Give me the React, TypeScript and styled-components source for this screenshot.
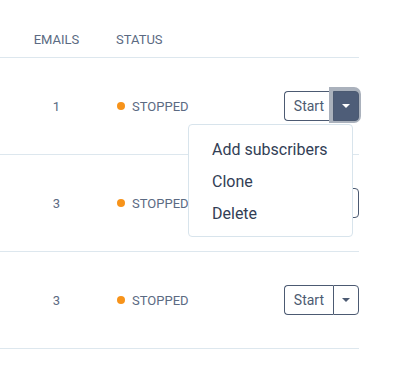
import React from "react";
import styled, { createGlobalStyle } from "styled-components";

const Global = createGlobalStyle`
  html, body { margin: 0; padding: 0; background: #ffffff; }
  body { font-family: Roboto, "Liberation Sans", sans-serif; }
`;

const Table = styled.div`
  width: 359px;
  display: flex;
  flex-direction: column;
`;

const Row = styled.div<{ $header?: boolean }>`
  display: grid;
  grid-template-columns: 113px 1fr auto;
  align-items: ${(p) => (p.$header ? "end" : "center")};
  height: ${(p) => (p.$header ? "48px" : "96px")};
  padding-bottom: ${(p) => (p.$header ? "9px" : "0")};
  border-bottom: 1px solid #dde7ee;
`;

const HeadCell = styled.div<{ $center?: boolean }>`
  font-size: 13px;
  color: #5b6a82;
  text-transform: uppercase;
  text-align: ${(p) => (p.$center ? "center" : "left")};
  padding-left: ${(p) => (p.$center ? "0" : "3px")};
  line-height: 16px;
`;

const Cell = styled.div<{ $center?: boolean }>`
  font-size: 13px;
  color: #5b6a82;
  text-align: ${(p) => (p.$center ? "center" : "left")};
  padding-left: ${(p) => (p.$center ? "0" : "4px")};
`;

const Status = styled.div`
  display: flex;
  align-items: center;
  gap: 7px;
  font-size: 13px;
  color: #5b6a82;
  text-transform: uppercase;
`;

const Dot = styled.span`
  width: 8px;
  height: 8px;
  border-radius: 50%;
  background: #f7931a;
`;

const ActionCell = styled.div`
  position: relative;
  display: flex;
  justify-content: flex-end;
`;

const SplitButton = styled.div`
  display: flex;
  height: 30px;
`;

const StartButton = styled.button`
  height: 30px;
  box-sizing: border-box;
  padding: 0 9px;
  border: 1px solid #4c5a72;
  border-right: none;
  border-radius: 4px 0 0 4px;
  background: #ffffff;
  color: #4d5b72;
  font-family: Roboto, "Liberation Sans", sans-serif;
  font-size: 14px;
  cursor: pointer;
`;

const CaretButton = styled.button<{ $open?: boolean }>`
  width: 26px;
  height: 30px;
  box-sizing: border-box;
  display: flex;
  align-items: center;
  justify-content: center;
  padding: 0;
  border: 1px solid #4c5a72;
  border-radius: 0 4px 4px 0;
  background: ${(p) => (p.$open ? "#4e5d78" : "#ffffff")};
  box-shadow: ${(p) => (p.$open ? "-1px -1px 0 3px #aab1bc" : "none")};
  color: ${(p) => (p.$open ? "#ffffff" : "#4c5a72")};
  cursor: pointer;
  position: relative;
`;

const Caret = styled.span`
  width: 0;
  height: 0;
  border-left: 4px solid transparent;
  border-right: 4px solid transparent;
  border-top: 4px solid currentColor;
`;

const Menu = styled.div`
  position: absolute;
  top: 33px;
  right: 6px;
  width: 165px;
  box-sizing: border-box;
  padding: 8px 0 7px;
  background: #ffffff;
  border: 1px solid #d8e4ec;
  border-radius: 4px;
  z-index: 10;
  display: flex;
  flex-direction: column;
`;

const MenuItem = styled.div`
  height: 32px;
  display: flex;
  align-items: center;
  padding-left: 23px;
  font-size: 16px;
  color: #323e55;
`;

type RowData = { emails: number; open?: boolean };

const rows: RowData[] = [{ emails: 1, open: true }, { emails: 3 }, { emails: 3 }];

export default function App() {
  return (
    <>
      <Global />
      <Table>
        <Row $header>
          <HeadCell $center>Emails</HeadCell>
          <HeadCell>Status</HeadCell>
          <div />
        </Row>
        {rows.map((r, i) => (
          <Row key={i}>
            <Cell $center>{r.emails}</Cell>
            <Cell>
              <Status>
                <Dot />
                Stopped
              </Status>
            </Cell>
            <ActionCell>
              <SplitButton>
                <StartButton>Start</StartButton>
                <CaretButton $open={r.open}>
                  <Caret />
                </CaretButton>
              </SplitButton>
              {r.open && (
                <Menu>
                  <MenuItem>Add subscribers</MenuItem>
                  <MenuItem>Clone</MenuItem>
                  <MenuItem>Delete</MenuItem>
                </Menu>
              )}
            </ActionCell>
          </Row>
        ))}
      </Table>
    </>
  );
}
